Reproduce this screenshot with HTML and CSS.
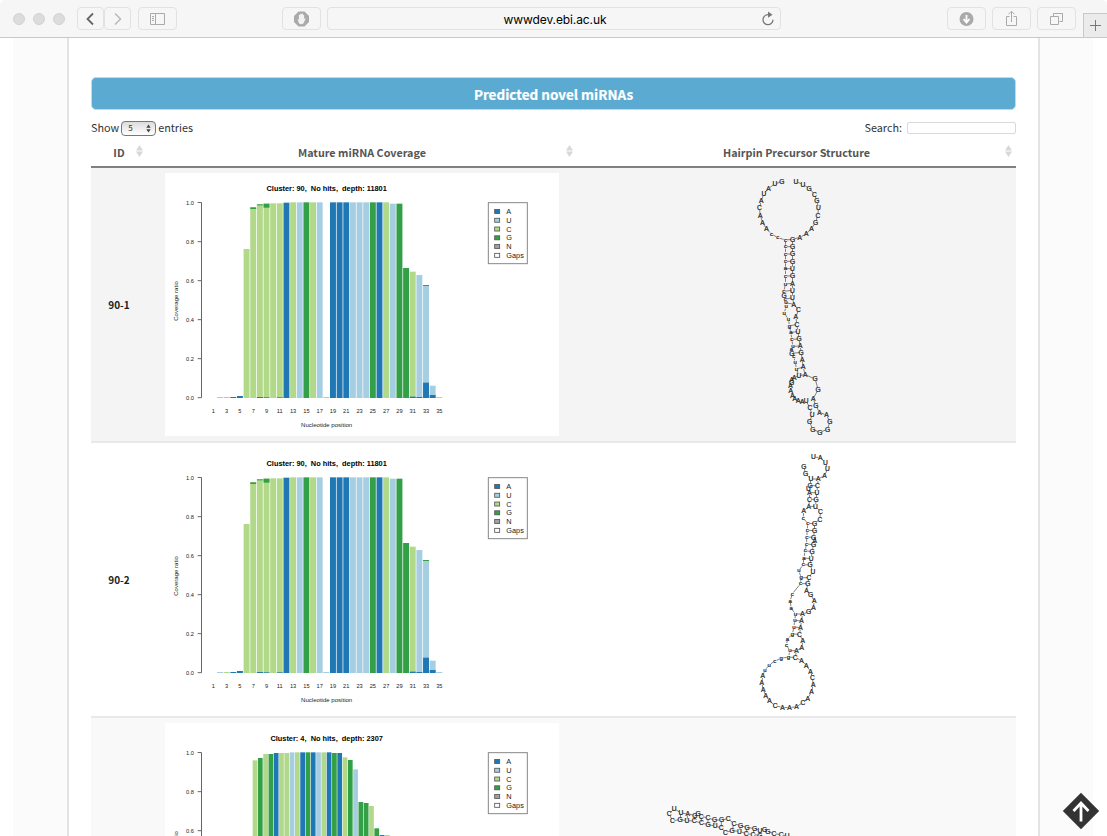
FILE: index.html
```html
<!DOCTYPE html>
<html lang="en">
<head>
<meta charset="utf-8">
<title>Predicted novel miRNAs</title>
<link rel="stylesheet" href="styles.css">
</head>
<body>
<header class="toolbar">
  <div class="dots"><i></i><i></i><i></i></div>
  <div class="nav-pair">
    <span class="btn"><svg width="26" height="22"><path d="M15 5.500L9.500 11l5.500 5.500" class="dark"/></svg></span>
    <span class="btn"><svg width="26" height="22"><path d="M10 5.500l5.500 5.500-5.500 5.500" class="light"/></svg></span>
  </div>
  <span class="btn wide side"><svg width="37" height="21"><path d="M11.500 5.500h14v11h-14zM16.500 5.500v11M13 8.500h2M13 10.500h2M13 12.500h2" class="thin"/></svg></span>
  <span class="btn wide stop"><svg width="37" height="21"><path d="M15.500 3.500h6l4.500 4.500v6l-4.500 4.500h-6L11 14V8z" fill="#aaa"/><path d="M14.500 10.500l1.200 4.500q2.600 2.500 5 0l2-4.500q-.8-.8-1.600.6V7q-.6-.7-1.200 0V5.800q-.7-.8-1.400 0v.4q-.7-.7-1.400 0V7q-.7-.6-1.200 0v5z" fill="#f2f2f2"/></svg></span>
  <div class="url"><span>wwwdev.ebi.ac.uk</span><svg class="reload" width="14" height="16"><path d="M8 3.700H7A5 5 0 1 0 12 8.800" class="reload-line"/><path d="M7 .6l4.500 3.100L7 6.800z" fill="#777"/></svg></div>
  <span class="btn wide down"><svg width="37" height="21"><circle cx="18.500" cy="11" r="7" fill="#aaa"/><path d="M18.500 7v6.500M15.500 11l3 3.500 3-3.500" class="white"/></svg></span>
  <span class="btn wide"><svg width="37" height="21"><path d="M16.500 8.500h-3v9h10v-9h-3M18.500 14V3.500M15.500 6.300l3-3 3 3" class="thin"/></svg></span>
  <span class="btn wide"><svg width="37" height="21"><path d="M12.500 8.500h8v8h-8zM15.500 8V5.500h9v8h-3" class="thin"/></svg></span>
  <span class="new-tab"><svg width="23" height="23"><path d="M11.500 6v11M6 11.500h11" class="plus"/></svg></span>
</header>
<div class="backdrop">
  <main class="panel">
    <h1 class="banner">Predicted novel miRNAs</h1>
    <div class="controls">
      <div class="length">Show <span class="select">5<svg width="7" height="11"><path d="M1.300 4.700L3.500 1.500l2.200 3.200zM1.300 6.300h4.400L3.500 9.500z" fill="#444"/></svg></span> entries</div>
      <label class="search">Search: <input type="text"></label>
    </div>
    <section class="table">
      <div class="row head">
        <div class="cell">ID<i class="sort"></i></div>
        <div class="cell">Mature miRNA Coverage<i class="sort"></i></div>
        <div class="cell">Hairpin Precursor Structure<i class="sort"></i></div>
      </div>
      <div class="row odd">
        <div class="cell id">90-1</div>
        <div class="cell"><svg class="chart" data-chart="0" viewBox="15 9 1182 789"></svg></div>
        <div class="cell"><svg class="hairpin" data-hairpin="0" viewBox="-421.500 9 1182 789"></svg></div>
      </div>
      <div class="row">
        <div class="cell id">90-2</div>
        <div class="cell"><svg class="chart" data-chart="0" viewBox="15 9 1182 789"></svg></div>
        <div class="cell"><svg class="hairpin" data-hairpin="1" viewBox="-421.500 9 1182 789"></svg></div>
      </div>
      <div class="row last">
        <div class="cell id"></div>
        <div class="cell"><svg class="chart" data-chart="1" viewBox="15 9 1182 789"></svg></div>
        <div class="cell"><svg class="hairpin" data-hairpin="2" viewBox="-421.500 9 1182 789"></svg></div>
      </div>
    </section>
  </main>
</div>
<svg class="to-top" width="38" height="38"><path d="M19 .8L37.200 19 19 37.200.8 19z" fill="#333"/><path d="M19 29.500V11M11.500 19l7.500-8 7.500 8" class="arrow"/></svg>
<script src="charts.js"></script>
</body>
</html>
```

FILE: styles.css
```css
* { box-sizing: border-box; }
body {
  margin: 0;
  height: 836px;
  overflow: hidden;
  background: #fff;
  color: #222;
  font-family: "Noto Sans CJK SC", "Open Sans", sans-serif;
  font-size: 10.800px;
}
svg { display: block; }

/* browser toolbar */
.toolbar {
  display: flex;
  align-items: center;
  height: 38px;
  padding-left: 13px;
  background: #f6f6f6;
  border-bottom: 1px solid #c9c9c9;
  border-radius: 5px 5px 0 0;
}
.toolbar > * { flex: none; }
.dots { display: flex; gap: 8px; }
.dots i { width: 12px; height: 12px; border-radius: 50%; background: #dcdcdc; border: 1px solid #d2d2d2; }
.nav-pair { display: flex; margin-left: 12px; }
.btn { width: 27px; height: 23px; border: 1px solid #e2e2e2; border-radius: 4px; overflow: hidden; }
.wide { width: 39px; margin-left: 6px; }
.side { margin-left: 7px; }
.stop { margin-left: 105px; }
.down { margin-left: 166px; }
.url {
  display: flex;
  align-items: center;
  justify-content: center;
  width: 454px;
  height: 23px;
  margin-left: 6px;
  padding-left: 21px;
  padding-right: 5px;
  border: 1px solid #e2e2e2;
  border-radius: 4px;
  color: #000;
  font: 12px Inter, sans-serif;
  letter-spacing: -.1px;
}
.url span { flex: 1; padding-top: 1px; text-align: center; }
.new-tab { align-self: flex-end; width: 24px; height: 24px; margin-left: 7px; background: #ebebeb; border: 1px solid #c9c9c9; border-width: 1px 0 0 1px; }
.toolbar path { stroke-width: 1; }
.toolbar .dark, .toolbar .light, .thin, .white, .plus, .reload-line { fill: none; }
.toolbar .dark { stroke: #666; stroke-width: 1.800; }
.toolbar .light { stroke: #bbb; stroke-width: 1.600; }
.thin { stroke: #aaa; }
.toolbar .white { stroke: #fff; stroke-width: 1.800; }
.plus { stroke: #777; }
.toolbar .reload-line { stroke: #777; stroke-width: 1.300; }

/* page frame */
.backdrop { width: 1080px; margin-left: 13px; padding: 0 53px 0 54px; background: #fbfbfb; }
.panel { width: 973px; height: 798px; padding: 39px 22px 0; background: #fff; border: 2px solid #e3e3e3; border-width: 0 2px; overflow: hidden; }
.banner {
  height: 33px;
  margin: 0;
  border: 1px solid #cfd5d8;
  border-radius: 5px;
  background: #5aaad2;
  color: #fff;
  font-size: 13.500px;
  font-weight: 700;
  line-height: 32px;
  text-align: center;
  -webkit-text-stroke: .2px #fff;
}
.controls { display: flex; justify-content: space-between; align-items: center; height: 28px; padding-top: 5px; color: #333; line-height: 20px; }
.length, .search { display: flex; align-items: center; }
.select {
  display: flex;
  justify-content: space-between;
  align-items: center;
  width: 35px;
  height: 15px;
  margin: 3px 2px 0 2px;
  padding: 0 3px 0 6px;
  border: 1px solid #777;
  border-radius: 4px;
  background: linear-gradient(#dcdcdc, #fff);
  font-size: 8px;
}
.search input { width: 109px; height: 12px; margin: 3px 0 0 5px; padding: 0; border: 1px solid #d9d9d9; border-radius: 2px; }

/* results table */
.row { display: grid; grid-template-columns: 56px 430px 439px; height: 275px; border-bottom: 2px solid #e9e9e9; }
.head { height: 30px; border-bottom: 2px solid #808080; color: #555; font-weight: 700; line-height: 29px; }
.head .cell { position: relative; }
.odd { background: #f4f4f4; }
.last { background: #f9f9f9; }
.cell { text-align: center; }
.id { align-self: center; font-weight: 700; font-size: 10px; }
.sort { position: absolute; right: 4px; top: 7px; width: 7px; height: 12px; background: #d8d8d8; clip-path: polygon(50% 0, 100% 45%, 0 45%, 0 55%, 100% 55%, 50% 100%, 0 55%, 0 45%); }
.chart, .hairpin { width: 394px; height: 263px; margin: 5px auto 0; }
.chart { background: #fff; }
.chart text { font-family: "Liberation Sans", Arial, sans-serif; text-anchor: middle; fill: #222; }
.chart .title { font-size: 22.200px; font-weight: 700; fill: #000; }
.chart .tick { font-size: 17px; }
.chart .axis-name { font-size: 18.200px; }
.chart .key { font-size: 22px; text-anchor: start; }
.axis { fill: none; stroke: #666; stroke-width: 3; }
.legend-box { fill: #fff; stroke: #888; stroke-width: 3; }
.swatch { stroke: #555; stroke-width: 2.500; }
.hairpin text { font-family: "Liberation Sans", Arial, sans-serif; font-size: 20px; text-anchor: middle; fill: #222; stroke: #222; stroke-width: .7; }
.hairpin .small { font-size: 18px; }
.backbone, .pair { stroke: #555; stroke-width: 2.200; }
.to-top { position: absolute; left: 1061.500px; top: 792px; }
.arrow { fill: none; stroke: #fff; stroke-width: 2.800; }
```

FILE: charts.js
```javascript
const NS = "http://www.w3.org/2000/svg";
const COLORS = { A: "#1f78b4", U: "#a6cee3", C: "#b2d98a", G: "#33a048", N: "#a0a0a0", Gaps: "#fff" };

function add(svg, name, attrs, text) {
  const el = document.createElementNS(NS, name);
  for (const key in attrs) el.setAttribute(key, attrs[key]);
  if (text !== undefined) el.textContent = text;
  svg.appendChild(el);
}

// Each bar segment: [position, base, top, bottom]; bottom defaults to the baseline.
const charts = [
  {
    title: "Cluster: 90,\u00a0 No hits,\u00a0 depth: 11801", start: 160, step: 19.94, labels: 35, width: 17.8,
    bars: [[2,"U",681],[3,"C",681],[4,"A",681],[5,"A",678],[6,"C",237],[7,"C",112],[7,"G",112,117],[8,"C",103],[8,"G",103,106],
      [9,"C",101],[9,"G",101,113],[10,"C",100],[11,"C",100],[12,"A",98],[13,"C",97],[14,"U",97],[15,"G",97],[16,"C",97],[17,"U",97],
      [18,"U",681],[19,"A",97],[20,"A",97],[21,"A",97],[22,"U",97],[23,"U",97],[24,"U",97],[25,"G",97],[26,"A",97],[27,"C",97],
      [28,"U",101],[29,"G",101],[30,"G",294],[31,"C",305],[32,"U",315],[33,"U",345],[33,"G",345,348],[33,"A",638],[34,"U",647],
      [34,"A",675],[35,"U",681],[8,"A",681],[9,"A",682],[11,"A",682],[31,"A",680],[32,"A",681]]
  },
  {
    title: "Cluster: 4,\u00a0 No hits,\u00a0 depth: 2307", start: 285, step: 15.88, labels: 0, width: 14.2,
    bars: [..."CGCGACCUCAGAUCAGACGUGGCGAC"].map((base, i) => [i + 1, base,
      [121,114,102,102,99,99,99,97,97,97,97,97,97,97,97,99,99,112,120,148,246,249,258,325,345,345][i]])
  }
];

document.querySelectorAll(".chart").forEach(svg => {
  const chart = charts[svg.dataset.chart];
  for (const [pos, base, top, bottom = 684] of chart.bars)
    add(svg, "rect", { x: chart.start + (pos - 1) * chart.step - chart.width / 2, y: top, width: chart.width, height: bottom - top, fill: COLORS[base] });
  add(svg, "path", { d: "M113 97.500H124.500V683H113M113 566H124M113 449H124M113 332H124M113 215H124", class: "axis" });
  ["1.0", "0.8", "0.6", "0.4", "0.2", "0.0"].forEach((label, i) =>
    add(svg, "text", { x: 90, y: 104 + i * 117, class: "tick" }, label));
  for (let i = 1; i <= chart.labels; i += 2)
    add(svg, "text", { x: 160 + (i - 1) * 19.94, y: 728, class: "tick" }, i);
  add(svg, "text", { x: 500, y: 63, class: "title" }, chart.title);
  if (chart.labels) add(svg, "text", { x: 500, y: 772, class: "axis-name" }, "Nucleotide position");
  add(svg, "text", { transform: "translate(54 393) rotate(-90)", class: "axis-name" }, "Coverage ratio");
  add(svg, "rect", { x: 985, y: 98, width: 117, height: 183, class: "legend-box" });
  Object.keys(COLORS).forEach((name, i) => {
    add(svg, "rect", { x: 1004, y: 118.5 + i * 26.3, width: 15, height: 12, fill: COLORS[name], class: "swatch" });
    add(svg, "text", { x: 1039, y: 132.5 + i * 26.3, class: "key" }, name);
  });
});

// Nucleotides in strand order as "base x y".
const hairpins = [
  "U 166 35,U 187 43,G 206 55,C 222 73,G 229 93,U 234 114,C 232 136,G 225 158,A 213 176,A 197 192,A 178 202,G 156 208,G 156 230,G 156 252,G 156 274,U 156 296,G 156 318,A 156 340,U 156 361,U 156 383,A 160 403,C 174 420,A 166 441,C 169 463,U 172 484,G 176 507,A 179 528,G 182 547,A 185 568,A 188 591,A 194 614,G 224 627,G 233 659,A 218 686,G 226 707,A 237 727,A 258 735,G 268 756,G 261 778,G 238 787,G 217 778,G 207 756,U 215 735,C 208 714,U 197 693,A 185 695,A 173 692,A 163 687,A 156 677,A 151 663,A 150 648,G 153 637,A 154 628,A 161 622,U 175 617,u 168 597,u 164 577,c 160 560,G 154 550,a 153 538,u 157 529,c 154 508,a 151 488,g 147 468,u 144 448,u 131 429,u 137 410,u 136 398,c 134 388,G 131 376,c 130 364,u 135 342,c 135 318,a 135 296,c 135 274,c 135 252,c 135 230,c 135 210,c 112 203,c 93 192,A 78 177,A 66 157,A 59 136,C 57 114,A 62 93,U 70 71,A 84 55,U 103 42,G 124 35",
  "U 219 36,A 239 38,U 255 53,U 261 72,A 252 92,A 233 102,C 231 123,U 229 143,G 227 163,U 225 184,C 240 199,C 238 223,G 222 236,G 222 257,G 219 277,A 223 288,G 219 299,G 215 320,U 212 341,G 209 360,U 217 381,C 205 398,G 202 416,A 198 436,G 210 448,A 221 468,A 219 487,G 204 501,A 186 507,A 183 528,A 180 548,C 177 568,A 187 587,A 184 607,A 168 617,C 164 638,A 183 646,A 197 661,A 210 679,C 216 698,A 218 719,A 213 741,A 202 760,C 187 773,A 168 785,A 147 788,A 126 787,C 104 782,A 87 768,A 76 752,A 68 734,A 64 713,A 67 693,u 73 676,u 86 660,c 103 648,g 122 640,g 144 636,u 148 617,c 138 600,a 141 582,g 156 567,u 160 546,u 163 526,u 165 507,a 152 490,a 149 468,c 155 447,c 180 416,g 182 398,u 175 377,c 188 359,a 190 339,c 194 317,c 198 297,c 199 276,c 200 256,c 202 235,c 188 220,A 190 198,A 205 184,C 207 163,A 207 143,U 204 130,G 209 121,U 211 102,G 195 86,G 190 64",
  "U 410 348,C 392 344,C 370 341,G 352 334,G 342 328,U 328 331,G 312 326,G 290 322,G 270 317,C 250 311,C 233 296,G 213 300,G 192 300,C 172 294,C 152 289,G 143 282,G 133 286,A 112 282,U 91 279,U 71 266,C 56 282,C 66 302,G 89 299,U 109 302,C 131 303,C 153 309,G 173 314,U 194 318,C 212 324,C 225 337,G 245 332,U 267 334,C 287 341,C 307 343,G 328 347"
];

document.querySelectorAll(".hairpin").forEach(svg => {
  const which = Number(svg.dataset.hairpin);
  const shift = which === 2 ? -270 : 0;
  const bases = hairpins[which].split(",").map(item => {
    const [base, x, y] = item.split(" ");
    return { base, x: Number(x) + shift, y: Number(y) };
  });
  const link = (a, b, cls, trim) => {
    const dx = b.x - a.x, dy = b.y - a.y, len = Math.hypot(dx, dy);
    if (len < trim * 2 + 2) return;
    const k = trim / len;
    add(svg, "line", { x1: a.x + dx * k, y1: a.y + dy * k, x2: b.x - dx * k, y2: b.y - dy * k, class: cls });
  };
  bases.forEach((a, i) => {
    if (bases[i + 1]) link(a, bases[i + 1], "backbone", 6);
    // Complementary bases lie side by side on the two strands of the stem.
    for (let j = i + 4; j < bases.length; j++) {
      const b = bases[j], dist = Math.hypot(a.x - b.x, a.y - b.y);
      const level = which === 2 ? Math.abs(a.x - b.x) < 8 : Math.abs(a.y - b.y) < 7;
      if (dist < 29 && level) link(a, b, "pair", 4);
    }
    const small = a.base === a.base.toLowerCase();
    add(svg, "text", { x: a.x, y: a.y + (small ? 5 : 7), class: small ? "small" : "" }, a.base);
  });
});
```
